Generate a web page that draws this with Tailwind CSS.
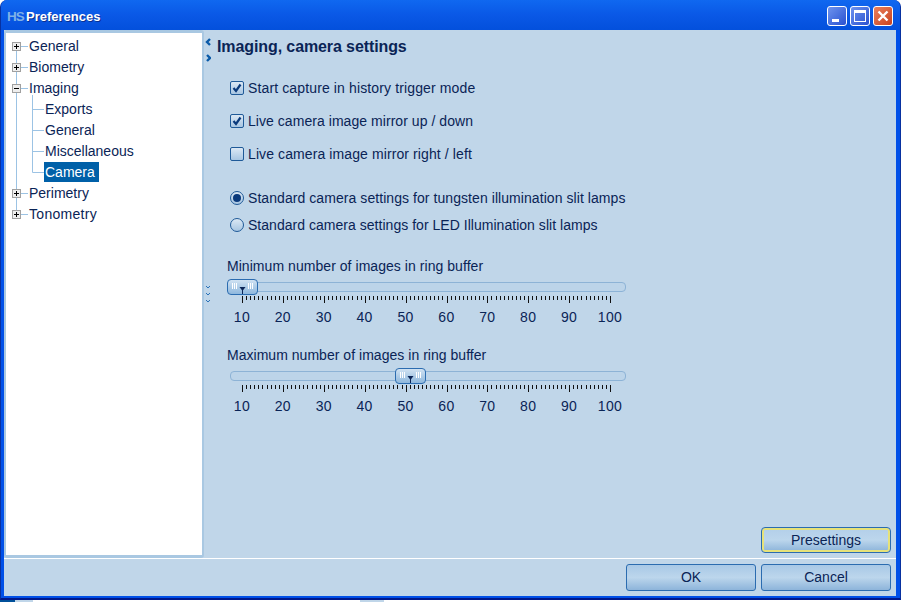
<!DOCTYPE html>
<html lang="en">
<head>
<meta charset="UTF-8">
<title>Preferences</title>
<script src="https://cdn.jsdelivr.net/npm/@tailwindcss/browser@4"></script>
</head>
<body class="w-[901px] h-[602px] overflow-hidden bg-white font-['Liberation_Sans',Arial,sans-serif] text-[14px] text-[#0a2456]">
<!-- Window -->
<div class="w-[901px] h-[600px] flex flex-col bg-[#0050e8] border-x border-[#0831a0] border-b-2 border-b-[#00188a] rounded-t-[7px] overflow-hidden">
  <!-- Title bar -->
  <div class="h-[30px] shrink-0 flex items-center pt-[2px] pl-[6px] pr-[7px] bg-gradient-to-b from-[#1068f0] via-[#0a58e6] to-[#0350dc]">
    <span class="w-[15px] h-[13px] mr-[4px] font-bold text-[#7fb0e6] text-[13.5px] leading-[13px] tracking-[-1px]">HS</span>
    <span class="mt-[2px] font-bold text-[13px] text-white [text-shadow:1px_1px_0_#0a2f90]">Preferences</span>
    <div class="ml-auto flex gap-[3px]">
      <div class="w-[20px] h-[20px] rounded-[3px] border border-white bg-gradient-to-br from-[#6f93ee] to-[#2a50d0] flex items-end pl-[4px] pb-[3px]">
        <div class="w-[7px] h-[3px] bg-white"></div>
      </div>
      <div class="w-[20px] h-[20px] rounded-[3px] border border-white bg-gradient-to-br from-[#6f93ee] to-[#2a50d0] flex items-center justify-center">
        <div class="w-[12px] h-[12px] border border-white border-t-[3px]"></div>
      </div>
      <div class="w-[20px] h-[20px] rounded-[3px] border border-white bg-gradient-to-br from-[#e9805c] to-[#c8401c] flex items-center justify-center">
        <svg width="12" height="12" viewBox="0 0 12 12"><path d="M1.5 1.5 10.5 10.5M10.5 1.5 1.5 10.5" stroke="#fff" stroke-width="2.4"/></svg>
      </div>
    </div>
  </div>

  <!-- Client area -->
  <div class="flex-1 flex flex-col ml-[3px] mr-[4px] mb-[2px] bg-[#c0d6e9]">
    <div class="h-[528px] flex">
      <!-- Tree panel -->
      <div class="w-[200px] h-[528px] shrink-0 border-2 border-t-[3px] border-b-[3px] border-[#a9c8e2] rounded-[3px] bg-white pl-[6px] pt-[3px] relative">
        <svg class="absolute left-0 top-0" width="60" height="200" fill="none" stroke="#9cc3e4">
          <path d="M10.5 10V181M15 13.5H22M15 34.5H22M15 55.5H22M15 160.5H22M15 181.5H22M26.5 62V139.5H38M26.5 76.5H38M26.5 97.5H38M26.5 118.5H38"/>
        </svg>
        <div class="relative">
          <div class="h-[21px] flex items-center">
            <svg class="mr-[8px]" width="9" height="9"><rect x=".5" y=".5" width="8" height="8" fill="#eee" stroke="#a0a0a0"/><path d="M2 4.5H7M4.5 2V7" stroke="#000"/></svg>General
          </div>
          <div class="h-[21px] flex items-center">
            <svg class="mr-[8px]" width="9" height="9"><rect x=".5" y=".5" width="8" height="8" fill="#eee" stroke="#a0a0a0"/><path d="M2 4.5H7M4.5 2V7" stroke="#000"/></svg>Biometry
          </div>
          <div class="h-[21px] flex items-center">
            <svg class="mr-[8px]" width="9" height="9"><rect x=".5" y=".5" width="8" height="8" fill="#eee" stroke="#a0a0a0"/><path d="M2 4.5H7" stroke="#000"/></svg>Imaging
          </div>
          <div class="h-[21px] flex items-center pl-[33px]">Exports</div>
          <div class="h-[21px] flex items-center pl-[33px]">General</div>
          <div class="h-[21px] flex items-center pl-[33px]">Miscellaneous</div>
          <div class="h-[21px] flex items-center pl-[32px]"><span class="h-[20px] w-[55px] pl-[1px] leading-[20px] -mt-[2px] bg-[#0060a8] text-white">Camera</span></div>
          <div class="h-[21px] flex items-center">
            <svg class="mr-[8px]" width="9" height="9"><rect x=".5" y=".5" width="8" height="8" fill="#eee" stroke="#a0a0a0"/><path d="M2 4.5H7M4.5 2V7" stroke="#000"/></svg>Perimetry
          </div>
          <div class="h-[21px] flex items-center">
            <svg class="mr-[8px]" width="9" height="9"><rect x=".5" y=".5" width="8" height="8" fill="#eee" stroke="#a0a0a0"/><path d="M2 4.5H7M4.5 2V7" stroke="#000"/></svg><span class="tracking-[0.3px]">Tonometry</span>
          </div>
        </div>
      </div>

      <!-- Splitter -->
      <div class="w-[13px] shrink-0 pl-[1px] pt-[8px] flex flex-col items-start">
        <svg width="6" height="26" fill="none" stroke="#0a5aa8" stroke-width="2.4"><path d="M5 1 2 4 5 7M2 17 5 20 2 23"/></svg>
        <svg class="mt-[219px]" width="6" height="20" fill="none" stroke="#2a72b8"><path d="M1 3 3 5 5 3M1 10 3 12 5 10M1 17 3 19 5 17"/></svg>
      </div>

      <!-- Settings -->
      <div class="flex-1 flex flex-col">
        <h1 class="mt-[8px] h-[18px] leading-[18px] font-bold text-[16px] tracking-[-0.1px]">Imaging, camera settings</h1>

        <div class="pl-[13px]">
          <div class="mt-[24px] h-[16px] flex items-center tracking-[0.13px]">
            <span class="w-[14px] h-[14px] mr-[4px] rounded-[2px] border border-[#1f5a98] bg-gradient-to-b from-[#dbe8f4] to-[#a8c6e2] flex items-center justify-center">
              <svg width="10" height="10" viewBox="0 0 10 10"><path d="M1.5 5 4 8 8.5 1.5" fill="none" stroke="#0a3a7c" stroke-width="2.2"/></svg>
            </span>Start capture in history trigger mode
          </div>
          <div class="mt-[17px] h-[16px] flex items-center tracking-[0.05px]">
            <span class="w-[14px] h-[14px] mr-[4px] rounded-[2px] border border-[#1f5a98] bg-gradient-to-b from-[#dbe8f4] to-[#a8c6e2] flex items-center justify-center">
              <svg width="10" height="10" viewBox="0 0 10 10"><path d="M1.5 5 4 8 8.5 1.5" fill="none" stroke="#0a3a7c" stroke-width="2.2"/></svg>
            </span>Live camera image mirror up / down
          </div>
          <div class="mt-[17px] h-[16px] flex items-center tracking-[0.1px]">
            <span class="w-[14px] h-[14px] mr-[4px] rounded-[2px] border border-[#1f5a98] bg-gradient-to-b from-[#dbe8f4] to-[#a8c6e2]"></span>Live camera image mirror right / left
          </div>
          <div class="mt-[28px] h-[16px] flex items-center tracking-[0.065px]">
            <span class="w-[14px] h-[14px] mr-[4px] rounded-full border border-[#1f5a98] bg-gradient-to-b from-[#dbe8f4] to-[#a8c6e2] flex items-center justify-center">
              <span class="w-[8px] h-[8px] rounded-full bg-[#0a3a7c]"></span>
            </span>Standard camera settings for tungsten illumination slit lamps
          </div>
          <div class="mt-[11px] h-[16px] flex items-center tracking-[0.03px]">
            <span class="w-[14px] h-[14px] mr-[4px] rounded-full border border-[#1f5a98] bg-gradient-to-b from-[#dbe8f4] to-[#a8c6e2]"></span>Standard camera settings for LED Illumination slit lamps
          </div>
        </div>

        <!-- Sliders -->
        <div class="ml-[10px] mt-[25px] h-[16px] leading-[16px] tracking-[0.05px]">Minimum number of images in ring buffer</div>
        <div class="relative ml-[13px] mt-[8px] w-[396px] h-[10px] rounded-[4px] border border-[#8db3d6] bg-[#bcd4e9]">
          <div class="absolute left-[-4px] top-[-4px] w-[31px] h-[16px] rounded-[4px] border border-[#2b6cb0] bg-gradient-to-b from-[#d0e2f2] to-[#8fb8dd]">
            <svg width="29" height="14" fill="none"><path d="M4.5 3V9M6.5 3V9M8.5 3V9M20.5 3V9M22.5 3V9M24.5 3V9" stroke="#fff"/><path d="M11.5 7H17.5L14.5 11Z" fill="#0a2456"/><path d="M14.5 10V14" stroke="#0a2456"/></svg>
          </div>
        </div>
        <svg class="slider-ticks ml-[25px] mt-[4px] shrink-0" width="372" height="7"><path stroke="#111"/></svg>
        <div class="slider-labels ml-[4.5px] mt-[6px] h-[16px] leading-[16px] flex tracking-[0.3px]"></div>

        <div class="ml-[10px] mt-[22px] h-[16px] leading-[16px] tracking-[0.03px]">Maximum number of images in ring buffer</div>
        <div class="relative ml-[13px] mt-[8px] w-[396px] h-[10px] rounded-[4px] border border-[#8db3d6] bg-[#bcd4e9]">
          <div class="absolute left-[164px] top-[-4px] w-[31px] h-[16px] rounded-[4px] border border-[#2b6cb0] bg-gradient-to-b from-[#d0e2f2] to-[#8fb8dd]">
            <svg width="29" height="14" fill="none"><path d="M4.5 3V9M6.5 3V9M8.5 3V9M20.5 3V9M22.5 3V9M24.5 3V9" stroke="#fff"/><path d="M11.5 7H17.5L14.5 11Z" fill="#0a2456"/><path d="M14.5 10V14" stroke="#0a2456"/></svg>
          </div>
        </div>
        <svg class="slider-ticks ml-[25px] mt-[4px] shrink-0" width="372" height="7"><path stroke="#111"/></svg>
        <div class="slider-labels ml-[4.5px] mt-[6px] h-[16px] leading-[16px] flex tracking-[0.3px]"></div>

        <div class="mt-auto mb-[6px] mr-[6px] self-end w-[128px] h-[24px] rounded-[3px] border-2 border-[#e6e27a] outline outline-1 outline-[#2b6cb0] bg-gradient-to-b from-[#b4d0ea] via-[#bcd6ec] to-[#92b8dc] flex items-center justify-center">Presettings</div>
      </div>
    </div>

    <!-- Footer -->
    <div class="flex-1 border-t border-white flex justify-end gap-[5px] pt-[5px] pr-[5px]">
      <div class="w-[130px] h-[27px] rounded-[3px] border border-[#2b6cb0] bg-gradient-to-b from-[#a8c8e6] via-[#bcd6ec] to-[#8db4da] flex items-center justify-center">OK</div>
      <div class="w-[130px] h-[27px] rounded-[3px] border border-[#2b6cb0] bg-gradient-to-b from-[#a8c8e6] via-[#bcd6ec] to-[#8db4da] flex items-center justify-center">Cancel</div>
    </div>
  </div>
</div>
<!-- What shows behind the window -->
<div class="h-[2px] flex">
  <div class="w-[15px] bg-[#00509a]"></div>
  <div class="w-[18px] bg-[#c0d6e9]"></div>
  <div class="w-[327px]"></div>
  <div class="w-[24px] bg-[#c0d6e9]"></div>
</div>
<script>
  // tick marks: one every 4.09px, a long one every 10 steps
  document.querySelectorAll('.slider-ticks path').forEach(function (p) {
    var d = '';
    for (var i = 0; i <= 90; i++) {
      var x = Math.round(i * 4.09) + 0.5;
      d += 'M' + x + ' 0V' + (i % 10 === 0 ? 7 : 4);
    }
    p.setAttribute('d', d);
  });
  document.querySelectorAll('.slider-labels').forEach(function (row) {
    for (var v = 10; v <= 100; v += 10) {
      var s = document.createElement('span');
      s.style.width = '40.9px';
      s.style.textAlign = 'center';
      s.textContent = v;
      row.appendChild(s);
    }
  });
</script>
</body>
</html>
